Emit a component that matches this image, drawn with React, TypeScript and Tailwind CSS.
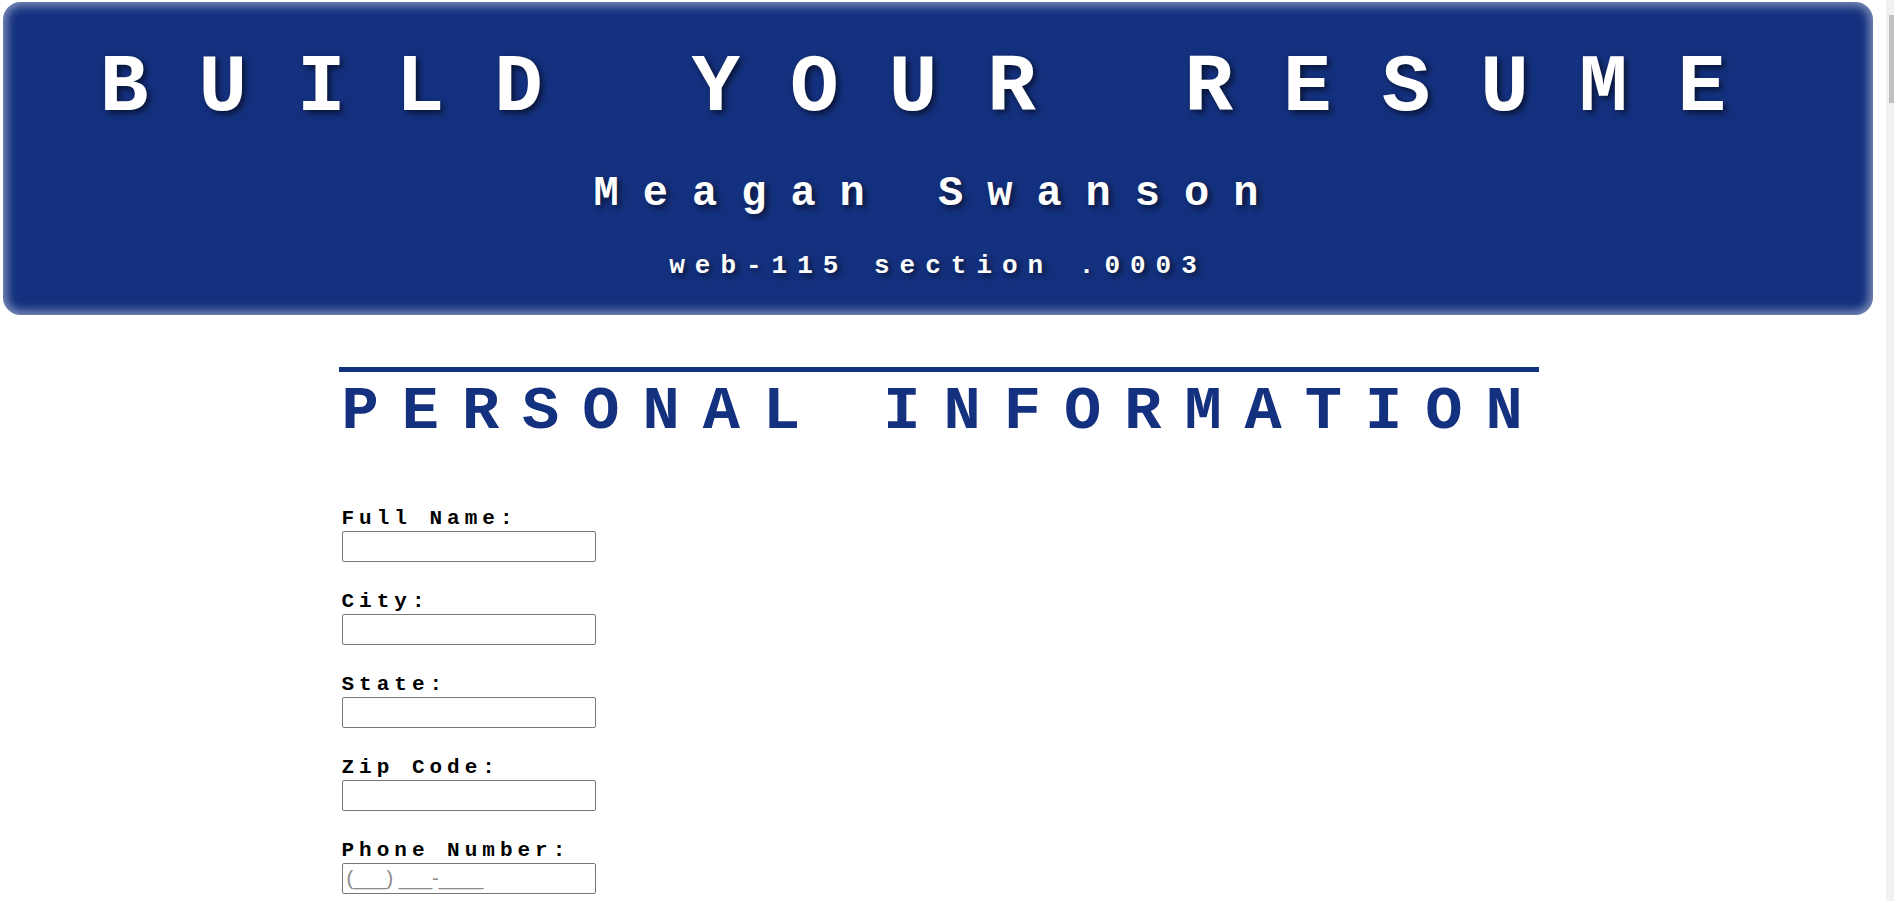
import { useState } from "react";

const fields = [
  { id: "fullName", label: "Full Name:" },
  { id: "city", label: "City:" },
  { id: "state", label: "State:" },
  { id: "zip", label: "Zip Code:" },
  { id: "phone", label: "Phone Number:", placeholder: "(___) ___-____" },
];

export default function App() {
  const [values, setValues] = useState<Record<string, string>>({});

  return (
    <div className="min-h-[1300px] w-[1877px] bg-white font-['Liberation_Mono','Courier_New',monospace]">
      {/* Header */}
      <header className="mt-[2px] ml-[3px] mr-[4px] h-[313px] rounded-[18px] bg-[#14317f] text-center font-bold text-white shadow-[inset_0_0_10px_4px_rgba(255,255,255,0.45)] [text-shadow:3px_3px_6px_rgba(0,0,0,0.6)]">
        <h1 className="whitespace-nowrap pt-[46px] text-[81px] leading-none tracking-[50px]">
          BUILD YOUR RESUME
        </h1>
        <h2 className="mt-[44px] whitespace-nowrap text-[42px] leading-none tracking-[24px]">
          Meagan Swanson
        </h2>
        <h3 className="mt-[38px] whitespace-nowrap text-[26px] leading-none tracking-[10px]">
          web-115 section .0003
        </h3>
      </header>

      {/* Form */}
      <main className="mx-auto mt-[52px] w-[1200px]">
        <div className="h-[5px] bg-[#14317f]" />
        <h2 className="mt-[9px] whitespace-nowrap pl-[3px] text-[62px] font-bold leading-none tracking-[23px] text-[#14317f]">
          PERSONAL INFORMATION
        </h2>

        <form className="mt-[66px] flex flex-col pl-[3px]">
          {fields.map((f) => (
            <div key={f.id} className="mb-[30px] flex flex-col">
              <label
                htmlFor={f.id}
                className="whitespace-nowrap text-[21px] font-bold leading-[20px] tracking-[5px] text-black"
              >
                {f.label}
              </label>
              <input
                id={f.id}
                type="text"
                placeholder={f.placeholder}
                value={values[f.id] || ""}
                onChange={(e) => setValues({ ...values, [f.id]: e.target.value })}
                className="mt-[2px] h-[31px] w-[254px] rounded-[2px] border border-[#767676] px-[4px] font-['Liberation_Sans',Arial,sans-serif] text-[20px] placeholder:text-[#8a8a8a]"
              />
            </div>
          ))}
        </form>
      </main>

      {/* browser scrollbar */}
      <div className="fixed top-0 right-0 h-full w-[8px] bg-[#f1f1f1]">
        <div className="mt-[15px] ml-[3px] h-[88px] bg-[#c1c1c1]" />
      </div>
    </div>
  );
}
